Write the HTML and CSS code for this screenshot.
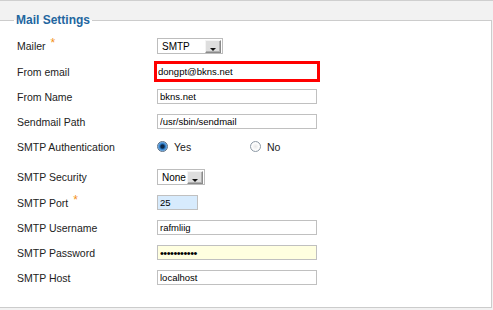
FILE: index.html
```html
<!DOCTYPE html>
<html lang="en">
<head>
    <meta charset="UTF-8">
    <title>Mail Settings</title>
    <link rel="stylesheet" href="styles.css">
</head>
<body>
<div class="page">
    <fieldset class="panel">
        <legend>Mail Settings</legend>

        <div class="row tall">
            <label>Mailer<span class="star">*</span></label>
            <span class="select wide"><span class="val">SMTP</span><span class="btn"></span></span>
        </div>
        <div class="row">
            <label>From email</label>
            <input class="txt hl" type="text" value="dongpt@bkns.net">
        </div>
        <div class="row">
            <label>From Name</label>
            <input class="txt" type="text" value="bkns.net">
        </div>
        <div class="row">
            <label>Sendmail Path</label>
            <input class="txt" type="text" value="/usr/sbin/sendmail">
        </div>
        <div class="row auth">
            <label>SMTP Authentication</label>
            <span class="radio on"></span><span class="opt">Yes</span>
            <span class="radio"></span><span class="opt">No</span>
        </div>
        <div class="row tall">
            <label>SMTP Security</label>
            <span class="select narrow"><span class="val">None</span><span class="btn"></span></span>
        </div>
        <div class="row">
            <label>SMTP Port<span class="star">*</span></label>
            <input class="txt port" type="text" value="25">
        </div>
        <div class="row">
            <label>SMTP Username</label>
            <input class="txt" type="text" value="rafmliig">
        </div>
        <div class="row">
            <label>SMTP Password</label>
            <input class="txt pass" type="password" value="abcdefghijk">
        </div>
        <div class="row">
            <label>SMTP Host</label>
            <input class="txt" type="text" value="localhost">
        </div>
    </fieldset>
</div>
</body>
</html>
```

FILE: styles.css
```css
* {
    margin: 0;
    padding: 0;
    box-sizing: border-box;
}

body {
    background-color: #f2f2f2;
    border-top: 1px solid #cfcfcf;
    font-family: "Liberation Sans", Arial, sans-serif;
    color: #222;
    height: 310px;
    overflow: hidden;
}

.page {
    padding-top: 12px;
}

.panel {
    margin: 0 1px 0 -2px;
    border: 1px solid #cccccc;
    background-color: #fff;
    padding: 6px 0 17px 18px;
    min-width: 0;
}

.panel legend {
    margin-left: -3px;
    padding: 0 2px;
    font-size: 12px;
    line-height: 14px;
    font-weight: bold;
    color: #23669f;
}

.row {
    display: flex;
    align-items: center;
    height: 25px;
}

.row.tall {
    height: 26px;
}

.row.auth {
    margin-bottom: 5px;
}

.row label {
    width: 140px;
    flex: none;
    font-size: 10.5px;
}

.star {
    color: #f39019;
    font-size: 12px;
    position: relative;
    top: -3px;
    margin-left: 5px;
}

.txt {
    width: 160px;
    height: 15px;
    border: 1px solid #c0c0c0;
    padding: 0 2px;
    font-family: "Liberation Sans", Arial, sans-serif;
    font-size: 9.5px;
    color: #000;
    background-color: #fff;
    outline: none;
}

.txt.hl {
    width: 166px;
    height: 21px;
    margin-left: -3px;
    border: 3px solid #ff0000;
    padding: 0 1px;
}

.txt.port {
    width: 41px;
    background-color: #d7ebfd;
}

.txt.pass {
    background-color: #ffffe0;
    font-size: 11px;
    letter-spacing: -0.5px;
}

/* fake dropdowns */
.select {
    display: flex;
    align-items: center;
    justify-content: space-between;
    height: 16px;
    border: 1px solid #bdbdbd;
    padding: 0 1px 0 4px;
    font-size: 10px;
    color: #000;
}

.select.wide {
    width: 66px;
}

.select.narrow {
    width: 48px;
}

.btn {
    position: relative;
    width: 16px;
    height: 13px;
    background-color: #dedede;
    border: 1px solid #8a8a8a;
    border-top-color: #f4f4f4;
    border-left-color: #f4f4f4;
    box-shadow: inset -1px -1px 0 #b0b0b0;
}

.btn::after {
    content: "";
    position: absolute;
    left: 4px;
    bottom: 1px;
    border-left: 3px solid transparent;
    border-right: 3px solid transparent;
    border-top: 3px solid #111;
}

/* radios */
.radio {
    width: 11px;
    height: 11px;
    border-radius: 50%;
    border: 1px solid #8e9aa6;
    background: radial-gradient(circle at 50% 50%, #e8e8e8 0%, #ffffff 60%, #dcdcdc 100%);
    flex: none;
}

.radio.on {
    border-color: #5b6f85;
    background: radial-gradient(circle at 50% 50%, #0d2a4a 0%, #0d2a4a 25%, #2a7ac8 45%, #8cc0ef 75%, #d8e9f8 100%);
}

.opt {
    font-size: 10.5px;
    margin-left: 6px;
    width: 76px;
}
```
